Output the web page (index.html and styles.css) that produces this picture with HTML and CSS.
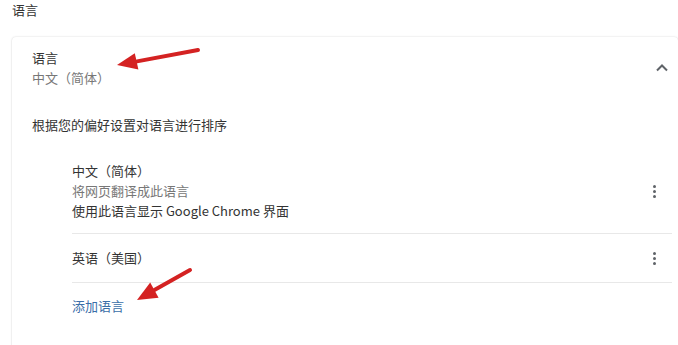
FILE: index.html
```html
<!DOCTYPE html>
<html lang="zh-CN">
<head>
    <meta charset="UTF-8">
    <title>语言</title>
    <link rel="stylesheet" href="styles.css">
</head>
<body>

<div class="page">
    <h2 class="section-title">语言</h2>

    <div class="card">
        <div class="card-header">
            <div>
                <div class="label">语言</div>
                <div class="sub">中文（简体）</div>
            </div>
            <svg class="chevron" width="20" height="20" viewBox="0 0 20 20">
                <path d="M5 12.5 L10 7.5 L15 12.5" fill="none" stroke="#5f6368" stroke-width="2"/>
            </svg>
        </div>

        <div class="hint">根据您的偏好设置对语言进行排序</div>

        <div class="lang-list">
            <div class="lang-item">
                <div>
                    <div>中文（简体）</div>
                    <div class="sub">将网页翻译成此语言</div>
                    <div>使用此语言显示 Google Chrome 界面</div>
                </div>
                <span class="more"><i></i><i></i><i></i></span>
            </div>
            <div class="lang-item short">
                <div>英语（美国）</div>
                <span class="more"><i></i><i></i><i></i></span>
            </div>
            <a class="add-lang" href="#">添加语言</a>
        </div>
    </div>
</div>

<!-- annotation arrows -->
<svg class="arrows" width="678" height="345" viewBox="0 0 678 345">
    <line x1="198" y1="50" x2="137" y2="61.4" stroke="#d42222" stroke-width="4" stroke-linecap="round"/>
    <polygon points="117,65 134.8,53.3 138.4,69.5" fill="#d42222"/>
    <line x1="190" y1="270" x2="154.4" y2="290.1" stroke="#d42222" stroke-width="4" stroke-linecap="round"/>
    <polygon points="137,300 150.2,282.5 158.6,297.7" fill="#d42222"/>
</svg>

</body>
</html>
```

FILE: styles.css
```css
body {
    margin: 0;
    background-color: #fff;
    font-family: "Noto Sans CJK SC", "Noto Sans", sans-serif;
    font-size: 13px;
    line-height: 20px;
    color: #333;
    overflow: hidden;
}
.page {
    position: relative;
    padding-left: 12px;
}
.section-title {
    margin: 0;
    font-size: 13px;
    font-weight: normal;
    line-height: 20px;
}
.card {
    margin-top: 17px;
    height: 320px;
    border-radius: 4px;
    box-shadow: 0 0 2px rgba(0, 0, 0, 0.18), 0 1px 2px rgba(0, 0, 0, 0.06);
}
.card-header {
    display: flex;
    justify-content: space-between;
    align-items: center;
    padding: 11px 6px 0 20px;
}
.sub {
    color: #777;
}
.chevron {
    display: block;
}
.hint {
    padding: 27px 0 0 20px;
}
.lang-list {
    display: flex;
    flex-direction: column;
    padding: 14px 6px 0 60px;
}
.lang-item {
    display: flex;
    justify-content: space-between;
    align-items: center;
    padding: 12px 0;
    border-bottom: 1px solid #e8e8e8;
}
.lang-item.short {
    padding: 0;
    height: 48px;
}
.more {
    display: flex;
    flex-direction: column;
    align-items: center;
    gap: 2px;
    width: 36px;
}
.more i {
    width: 3px;
    height: 3px;
    border-radius: 50%;
    background-color: #5f6368;
}
.add-lang {
    margin-top: 13px;
    color: #3a6ea8;
    text-decoration: none;
}
.arrows {
    position: absolute;
    top: 0;
    left: 0;
    pointer-events: none;
}
```
